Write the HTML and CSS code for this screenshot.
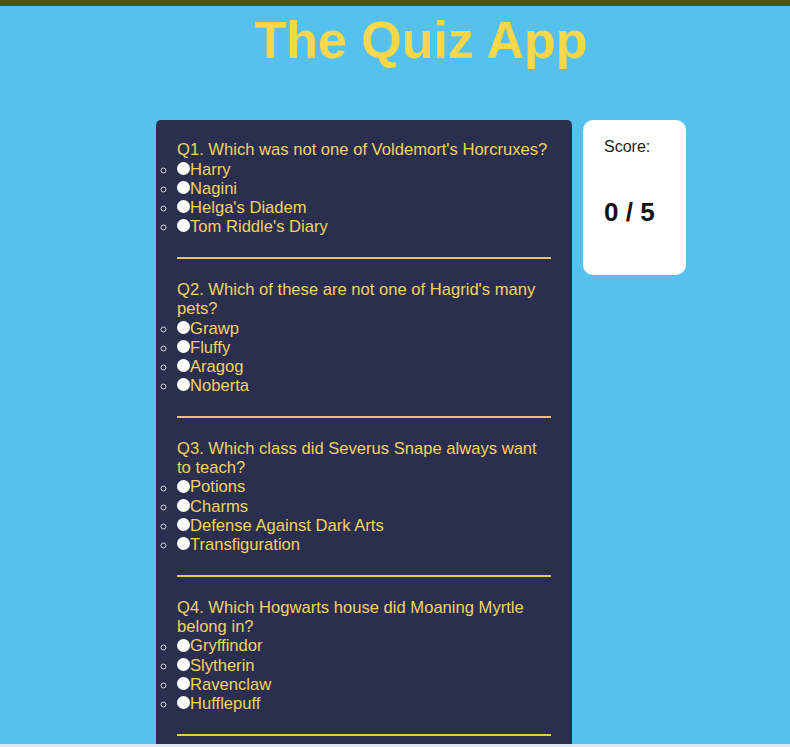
FILE: index.html
```html
<!DOCTYPE html>
<html lang="en">
<head>
<meta charset="utf-8">
<title>The Quiz App</title>
<link rel="stylesheet" href="styles.css">
</head>
<body>
<div class="topbar"></div>
<h1 class="title">The Quiz App</h1>
<main class="main">
  <section class="quiz">
    <div class="question">
      <p class="q-text">Q1. Which was not one of Voldemort's Horcruxes?</p>
      <ul class="options">
        <li><label><input type="radio" name="q1"><span>Harry</span></label></li>
        <li><label><input type="radio" name="q1"><span>Nagini</span></label></li>
        <li><label><input type="radio" name="q1"><span>Helga's Diadem</span></label></li>
        <li><label><input type="radio" name="q1"><span>Tom Riddle's Diary</span></label></li>
      </ul>
      <hr class="sep">
    </div>
    <div class="question">
      <p class="q-text">Q2. Which of these are not one of Hagrid's many pets?</p>
      <ul class="options">
        <li><label><input type="radio" name="q2"><span>Grawp</span></label></li>
        <li><label><input type="radio" name="q2"><span>Fluffy</span></label></li>
        <li><label><input type="radio" name="q2"><span>Aragog</span></label></li>
        <li><label><input type="radio" name="q2"><span>Noberta</span></label></li>
      </ul>
      <hr class="sep">
    </div>
    <div class="question">
      <p class="q-text">Q3. Which class did Severus Snape always want to teach?</p>
      <ul class="options">
        <li><label><input type="radio" name="q3"><span>Potions</span></label></li>
        <li><label><input type="radio" name="q3"><span>Charms</span></label></li>
        <li><label><input type="radio" name="q3"><span>Defense Against Dark Arts</span></label></li>
        <li><label><input type="radio" name="q3"><span>Transfiguration</span></label></li>
      </ul>
      <hr class="sep">
    </div>
    <div class="question">
      <p class="q-text">Q4. Which Hogwarts house did Moaning Myrtle belong in?</p>
      <ul class="options">
        <li><label><input type="radio" name="q4"><span>Gryffindor</span></label></li>
        <li><label><input type="radio" name="q4"><span>Slytherin</span></label></li>
        <li><label><input type="radio" name="q4"><span>Ravenclaw</span></label></li>
        <li><label><input type="radio" name="q4"><span>Hufflepuff</span></label></li>
      </ul>
      <hr class="sep">
    </div>
    <div class="question">
      <p class="q-text">Q5. What is Rowena Ravenclaw's lost treasure?</p>
      <ul class="options">
        <li><label><input type="radio" name="q5"><span>Her Diadem</span></label></li>
        <li><label><input type="radio" name="q5"><span>Her Locket</span></label></li>
        <li><label><input type="radio" name="q5"><span>Her Cup</span></label></li>
        <li><label><input type="radio" name="q5"><span>Her Sword</span></label></li>
      </ul>
      <hr class="sep">
    </div>
  </section>
  <aside class="score-card">
    <p class="score-label">Score:</p>
    <p class="score-value">0 / 5</p>
  </aside>
</main>
<div class="bottom-strip"></div>
</body>
</html>
```
FILE: styles.css
```css
html, body {
  margin: 0;
  padding: 0;
}

body {
  background: #55c1ef;
  font-family: "Liberation Sans", Arial, sans-serif;
  font-size: 16px;
}

.topbar {
  height: 6px;
  background: #3d5e05;
}

.title {
  margin: 4px 0 0;
  padding-left: 52px;
  text-align: center;
  font-size: 52px;
  font-weight: bold;
  color: #f8d84a;
  line-height: normal;
}

.main {
  display: flex;
  justify-content: center;
  align-items: flex-start;
  gap: 11px;
  margin-top: 50px;
  padding-left: 52px;
}

.quiz {
  box-sizing: border-box;
  width: 416px;
  padding: 21px 21px 40px;
  background: #2a2f50;
  border-radius: 5px;
  color: #f3d35e;
  font-size: 16.6px;
}

.q-text {
  margin: 0;
  line-height: 18.6px;
}

.options {
  margin: 0 0 21px;
  padding: 0;
  list-style: circle outside;
}

.options li {
  line-height: 19.2px;
  height: 19.2px;
}

.options li::marker {
  color: #d6d6d6;
  font-size: 15px;
}

.options label {
  display: inline-flex;
  align-items: center;
}

.options input[type="radio"] {
  appearance: none;
  -webkit-appearance: none;
  width: 13px;
  height: 13px;
  margin: -2px 0 0 0;
  border-radius: 50%;
  background: #ffffff;
  border: none;
}

.sep {
  margin: 0 0 22px;
  height: 2px;
  border: none;
  background: #e9c85a;
}

.score-card {
  box-sizing: border-box;
  width: 103px;
  height: 155px;
  padding: 18px 21px;
  background: #ffffff;
  border-radius: 10px;
  color: #1c1c1c;
}

.score-label {
  margin: 0;
  font-size: 16px;
  line-height: normal;
}

.score-value {
  margin: 41px 0 0;
  font-size: 26px;
  font-weight: bold;
  line-height: normal;
  color: #111111;
}

.bottom-strip {
  position: fixed;
  left: 0;
  right: 0;
  bottom: 0;
  height: 3px;
  background: #dfe7f3;
}
```
